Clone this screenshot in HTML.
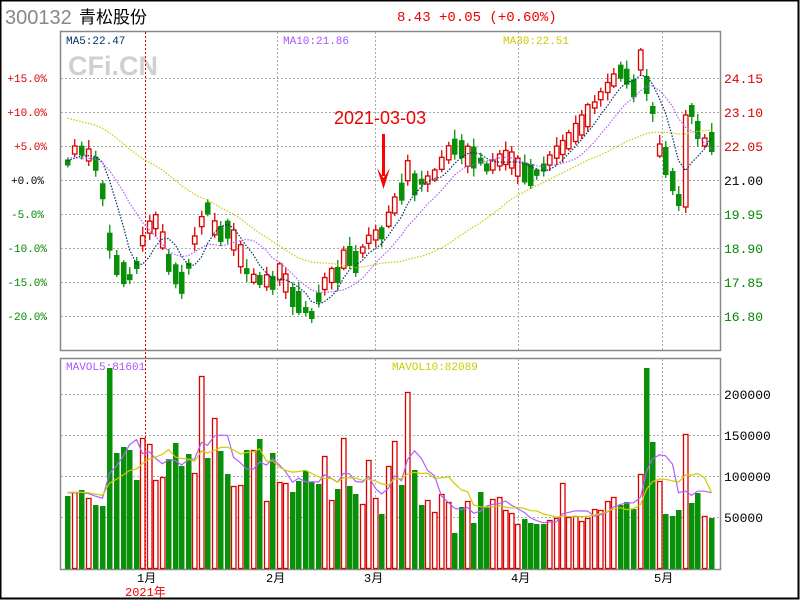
<!DOCTYPE html>
<html><head><meta charset="utf-8"><style>
html,body{margin:0;padding:0;background:#fff;}
#wrap{position:relative;width:800px;height:600px;overflow:hidden;}
svg text{font-family:"Liberation Mono","Noto Sans CJK SC",monospace;}
</style></head><body><div id="wrap">
<svg id="s" width="800" height="600" xmlns="http://www.w3.org/2000/svg">
<rect x="0.5" y="0.5" width="798" height="598" fill="#fff" stroke="#000" stroke-width="2"/>
<text x="5" y="24" font-size="20" fill="#888" style="font-family:'Liberation Sans',sans-serif">300132</text>
<text x="79" y="23" font-size="17" fill="#000" style="font-family:'Noto Sans CJK SC',sans-serif">青松股份</text>
<text x="397" y="21" font-size="14" fill="#e00">8.43 +0.05 (+0.60%)</text>
<text x="68" y="75" font-size="27" font-weight="bold" fill="#d0d0d0" style="font-family:'Liberation Sans',sans-serif">CFi.CN</text>
<rect x="60.5" y="31.5" width="660" height="319" fill="none" stroke="#888" stroke-width="1.5"/>
<rect x="60.5" y="358.5" width="660" height="211" fill="none" stroke="#888" stroke-width="1.5"/>
<g id="grid" stroke="#aaa" stroke-dasharray="2,2" stroke-width="1"></g>
<line x1="145.5" y1="32" x2="145.5" y2="569" stroke="#d00" stroke-dasharray="2,2"/>
<text x="66" y="44" font-size="11" fill="#036">MA5:22.47</text>
<text x="283" y="44" font-size="11" fill="#a5f">MA10:21.86</text>
<text x="503" y="44" font-size="11" fill="#cc0">MA30:22.51</text>
<text x="66" y="370" font-size="11" fill="#a5f">MAVOL5:81601</text>
<text x="392" y="370" font-size="11" fill="#cc0">MAVOL10:82089</text>
<g font-size="11" text-anchor="end">
<text x="47" y="82" fill="#d00">+15.0%</text><text x="47" y="116" fill="#d00">+10.0%</text>
<text x="47" y="150" fill="#d00">+5.0%</text><text x="44" y="184" fill="#000">+0.0%</text>
<text x="44" y="218" fill="#080">-5.0%</text><text x="47" y="252" fill="#080">-10.0%</text>
<text x="47" y="286" fill="#080">-15.0%</text><text x="47" y="320" fill="#080">-20.0%</text>
</g>
<g font-size="13">
<text x="724" y="83" fill="#d00">24.15</text><text x="724" y="117" fill="#d00">23.10</text>
<text x="724" y="151" fill="#d00">22.05</text><text x="724" y="185" fill="#000">21.00</text>
<text x="724" y="219" fill="#080">19.95</text><text x="724" y="253" fill="#080">18.90</text>
<text x="724" y="287" fill="#080">17.85</text><text x="724" y="321" fill="#080">16.80</text>
<text x="724" y="399" fill="#000">200000</text><text x="724" y="440" fill="#000">150000</text>
<text x="724" y="481" fill="#000">100000</text><text x="724" y="522" fill="#000">50000</text>
</g>
<g font-size="12" fill="#000" style="font-family:'Liberation Sans','Noto Sans CJK SC',sans-serif">
<text x="137" y="582">1月</text><text x="266" y="582">2月</text><text x="364" y="582">3月</text>
<text x="511" y="582">4月</text><text x="654" y="582">5月</text>
<text x="125" y="596" fill="#e00">2021年</text>
</g>
<text x="334" y="124" font-size="18" fill="#e00" style="font-family:'Liberation Sans',sans-serif">2021-03-03</text>
<rect x="382" y="134" width="3" height="42" fill="#f00"/>
<polygon points="377,168 383.5,189 390,168 383.5,178" fill="#f00"/>
<g id="vol"></g><g id="cand"></g><g id="ma"></g>
</svg></div>
<script>
var NS="http://www.w3.org/2000/svg";
function el(p,t,a){var e=document.createElementNS(NS,t);for(var k in a)e.setAttribute(k,a[k]);p.appendChild(e);return e;}
var g=document.getElementById('grid');
[78,112,146,180,214,248,282,316].forEach(function(y){el(g,'line',{x1:61,x2:720,y1:y+.5,y2:y+.5});});
[394,435,476,517].forEach(function(y){el(g,'line',{x1:61,x2:720,y1:y+.5,y2:y+.5});});
[277,375,518,662].forEach(function(x){el(g,'line',{x1:x+.5,x2:x+.5,y1:32,y2:350});el(g,'line',{x1:x+.5,x2:x+.5,y1:359,y2:569});});
var V=[[64,'g',496],[71,'r',492],[78,'g',490],[85,'r',498],[92,'g',505],[99,'g',506],[106,'g',368],[113,'g',453],[120,'g',447],[126,'g',450],[133,'g',480],[139,'r',438],[146,'r',444],[152,'r',480],[159,'r',477],[165,'g',459],[172,'g',443],[178,'g',466],[185,'g',454],[191,'r',473],[198,'r',376],[204,'g',458],[211,'r',418],[217,'g',451],[224,'g',474],[230,'r',486],[237,'r',485],[243,'g',450],[250,'r',450],[256,'g',439],[263,'r',501],[269,'g',453],[276,'r',482],[282,'r',483],[289,'g',492],[295,'g',481],[302,'g',471],[308,'g',482],[315,'g',484],[321,'r',456],[328,'r',500],[334,'g',489],
[340,'r',438],[346,'g',486],[352,'g',494],[359,'r',504],[365,'r',460],[372,'r',498],[378,'g',514],[385,'r',466],[391,'r',441],[398,'g',485],[404,'r',392],[411,'g',470],[418,'g',505],[424,'r',500],
[431,'r',512],[438,'r',494],[445,'r',502],[451,'g',533],[458,'g',507],[464,'r',501],[470,'g',523],[477,'g',492],[483,'g',507],[489,'r',499],[496,'r',497],[502,'r',510],[508,'r',513],[514,'r',524],[521,'g',519],[527,'g',523],[533,'g',524],[540,'g',524],[546,'r',520],[553,'r',518],[559,'r',483],[565,'r',517],[572,'r',516],[578,'r',521],[584,'r',518],[591,'r',509],[597,'r',510],[604,'r',501],[610,'r',497],[617,'g',505],[623,'g',502],[630,'g',509],[637,'r',474],[643,'g',368],[649,'g',442],[656,'r',481],[662,'g',514],[669,'g',516],[675,'g',510],[682,'r',434],[688,'g',503],[694,'g',493],[701,'r',516],[708,'g',518]];
var vg=document.getElementById('vol');
V.forEach(function(b){var x=b[0]+1;if(b[1]=='g')el(vg,'rect',{x:x,y:b[2],width:5.5,height:569-b[2],fill:'#089008'});
else el(vg,'rect',{x:x+.5,y:b[2]+.5,width:4.5,height:568-b[2],fill:'#fff',stroke:'#d00','stroke-width':1.3});});
function maLine(ys,xs,n,col,dash,pre){var pts=[];var arr=(pre||[]).concat(ys);var off=(pre||[]).length;
for(var i=0;i<ys.length;i++){var j=i+off;var s=0,c=0;for(var k=Math.max(0,j-n+1);k<=j;k++){s+=arr[k];c++;}pts.push(xs[i]+3.5+','+(s/c).toFixed(1));}
var a={points:pts.join(' '),fill:'none',stroke:col,'stroke-width':1.2};if(dash)a['stroke-dasharray']=dash;el(document.getElementById('ma'),'polyline',a);}
var vx=V.map(function(b){return b[0];}),vy=V.map(function(b){return b[2];});
maLine(vy,vx,5,'#b060ff',null,[492,492,492,492]);maLine(vy,vx,10,'#cccc00',null,[492,492,492,492,492,492,492,492,492]);
var K=[[64,170],[72,150],[80,150],[88,155],[96,165],[104,200],[110,250],[118,270],[126,275],[133,280],[140,245],[147,230],[154,220],[160,230],[166,260],[173,270],[180,285],[187,270],[194,240],[200,225],[206,205],[212,225],[219,235],[226,228],[232,238],[238,250],[245,270],[252,278],[258,280],[265,280],[271,285],[278,270],[285,283],[292,297],[298,302],[305,310],[311,315],[317,300],[323,285],[330,275],[336,278],[342,260],[348,255],[355,262],[361,252],[367,240],[374,235],[380,235],[386,225],[393,205],[399,205],[405,165],[412,185],[418,183],[425,180],[431,180],[437,170],[443,160],[450,150],[456,145],[462,150],[470,160],[476,155],[483,165],[489,170],[495,160],[502,160],[508,155],[514,165],[521,170],[527,175],[533,175],[540,170],[546,165],[552,155],[559,150],[565,145],[572,135],[578,130],[584,120],[591,110],[597,100],[604,90],[610,85],[616,75],[622,70],[628,80],[634,90],[640,60],[647,95],[653,125],[659,148],[666,160],[672,180],[678,195],[685,202],[691,170],[697,115],[704,125],[710,130],[716,128]];
function interp(x){for(var i=0;i<K.length-1;i++){if(x<=K[i+1][0]){var t=(x-K[i][0])/(K[i+1][0]-K[i][0]);return K[i][1]+t*(K[i+1][1]-K[i][1]);}}return K[K.length-1][1];}
var OV={643:[85,9],649:[110,4],656:[150,6],662:[161,14],669:[181,10],675:[200,6],682:[161,46],688:[111,6],694:[130,9],701:[142,4],708:[142,10]};
var cg=document.getElementById('cand');var mids=[];
V.forEach(function(b,i){var x=b[0]+1,m=interp(b[0]+3);
var h=3+((i*37)%9);if(OV[b[0]]){m=OV[b[0]][0];h=OV[b[0]][1];}mids.push(m);
var w1=2+((i*53)%8),w2=2+((i*29)%7);
var top=m-h,bot=m+h;var col=b[1]=='r'?'#d00':'#089008';
el(cg,'line',{x1:x+2.75,x2:x+2.75,y1:top-w1,y2:bot+w2,stroke:col,'stroke-width':1.3});
if(b[1]=='g')el(cg,'rect',{x:x,y:top,width:5.5,height:2*h,fill:col});
else el(cg,'rect',{x:x+.5,y:top,width:4.5,height:2*h,fill:'#fff',stroke:col,'stroke-width':1.3});});
var pre30=[];for(var i=0;i<29;i++)pre30.push(100+i*1.2);
maLine(mids,vx,5,'#036',"1.5,1.5",[165,160,158,160]);
maLine(mids,vx,10,'#b060ff',"1.5,1.5",[150,150,152,155,158,160,162,165,165]);
maLine(mids,vx,30,'#cccc00',"1.5,1.5",pre30);
</script></body></html>
